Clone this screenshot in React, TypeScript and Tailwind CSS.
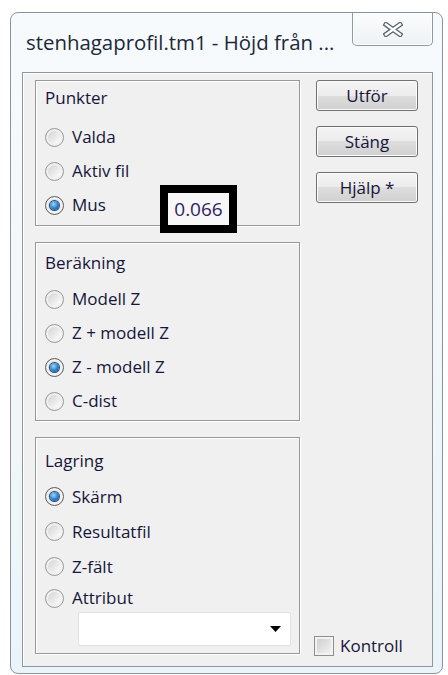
import React from "react";

const txt = "text-[#16163a]";

function Radio({ checked = false }: { checked?: boolean }) {
  return (
    <span
      className={`flex h-[19px] w-[19px] shrink-0 items-center justify-center rounded-full border ${
        checked ? "border-[#5c5c5c]" : "border-[#979797]"
      } bg-[linear-gradient(135deg,#cdcdcd,#f4f4f4_70%,#ffffff)] shadow-[inset_0_0_0_2px_#f1f1f1]`}
    >
      {checked && (
        <span className="h-[9px] w-[9px] rounded-full bg-[radial-gradient(circle_at_40%_35%,#9ad8f8,#2b7cc4_55%,#17508f)] shadow-[0_0_0_1px_#1f4d7d]" />
      )}
    </span>
  );
}

function Option({ label, checked, h = "h-[34px]" }: { label: string; checked?: boolean; h?: string }) {
  return (
    <div className={`flex ${h} items-center gap-[8px]`}>
      <Radio checked={checked} />
      <span className={`leading-[20px] ${txt}`}>{label}</span>
    </div>
  );
}

function Group({
  title,
  className = "",
  children,
}: {
  title: string;
  className?: string;
  children: React.ReactNode;
}) {
  return (
    <div
      className={`relative border border-[#989898] px-[9px] shadow-[inset_1px_1px_0_#ffffff,1px_1px_0_#ffffff] ${className}`}
    >
      <div className={`leading-[20px] ${txt}`}>{title}</div>
      {children}
    </div>
  );
}

function Button({ label }: { label: string }) {
  return (
    <button className="flex h-[31px] w-[102px] items-center justify-center rounded-[3px] border border-[#707070] bg-[linear-gradient(#f4f4f4_0%,#ececec_50%,#dedede_50%,#d0d0d0_100%)] shadow-[inset_0_0_0_1px_#fbfbfb] text-[#16163a]">
      {label}
    </button>
  );
}

export default function App() {
  return (
    <div className="relative h-[675px] w-[448px] overflow-hidden bg-white font-['Open_Sans',sans-serif] text-[17px]">
      {/* Aero window frame */}
      <div className="ml-[10px] mt-[12px] flex h-[662px] w-[433px] flex-col rounded-[8px] border border-[#8b949d] bg-[linear-gradient(180deg,#f7fafc_0%,#f1f6f9_60%,#e9f5f9_100%)]">
        {/* title bar */}
        <div className="flex h-[59px] items-start">
          <div className="pl-[15px] pt-[18px] text-[20.4px] leading-[22px] text-[#1b2838]">
            stenhagaprofil.tm1 - Höjd från ...
          </div>
          <div className="ml-auto mr-[9px] flex h-[33px] w-[81px] items-center justify-center rounded-b-[5px] border border-t-0 border-[#8d99a6] bg-[linear-gradient(#fbfcfd,#eef2f5)] shadow-[inset_0_0_0_1px_#ffffff]">
            <svg width="20" height="15" viewBox="0 0 20 15">
              <path d="M3 2.5 L17 12.5 M17 2.5 L3 12.5" stroke="#59636e" strokeWidth="5" strokeLinecap="square" />
              <path d="M3 2.5 L17 12.5 M17 2.5 L3 12.5" stroke="#ffffff" strokeWidth="2.4" strokeLinecap="square" />
            </svg>
          </div>
        </div>

        {/* client area */}
        <div className="mb-[6px] ml-[11px] mr-[9px] flex flex-1 border border-[#8f969c] bg-[#f0f0f0] pl-[12px] pt-[7px] shadow-[inset_1px_1px_0_#ffffff]">
          <div className="flex w-[265px] flex-col">
            <Group title="Punkter" className="h-[146px] pt-[7px]">
              <div className="mt-[12px]">
                <Option label="Valda" />
                <Option label="Aktiv fil" />
                <Option label="Mus" checked />
              </div>
              <div className="absolute left-[124px] top-[104px] flex h-[48px] w-[77px] items-center justify-center border-[8px] border-black bg-[#f7f7f7] text-[19px] text-[#2f2266]">
                0.066
              </div>
            </Group>

            <Group title="Beräkning" className="mt-[16px] h-[179px] pt-[10px]">
              <div className="mt-[9px]">
                <Option label="Modell Z" />
                <Option label="Z + modell Z" />
                <Option label="Z - modell Z" checked />
                <Option label="C-dist" />
              </div>
            </Group>

            <Group title="Lagring" className="mt-[16px] h-[217px] pt-[13px]">
              <div className="mt-[8px]">
                <Option label="Skärm" checked h="h-[35px]" />
                <Option label="Resultatfil" h="h-[35px]" />
                <Option label="Z-fält" h="h-[35px]" />
                <Option label="Attribut" h="h-[28px]" />
              </div>
              <div className="ml-[33px] flex h-[34px] w-[213px] items-center justify-end rounded-[2px] border border-[#e2e2e2] bg-white pr-[9px]">
                <svg width="11" height="6" viewBox="0 0 11 6">
                  <path d="M0 0 H11 L5.5 6 Z" fill="#000000" />
                </svg>
              </div>
            </Group>
          </div>

          <div className="ml-[16px] flex w-[102px] flex-col gap-[15px] pb-[10px]">
            <Button label="Utför" />
            <Button label="Stäng" />
            <Button label="Hjälp *" />
            <label className="-ml-[2px] mt-auto flex items-center gap-[6px]">
              <span className="h-[20px] w-[20px] border border-[#8e8f8f] bg-[linear-gradient(135deg,#cbcbcb,#f6f6f6)] shadow-[inset_0_0_0_2px_#f2f2f2]" />
              <span className={`leading-[20px] ${txt}`}>Kontroll</span>
            </label>
          </div>
        </div>
      </div>
    </div>
  );
}
